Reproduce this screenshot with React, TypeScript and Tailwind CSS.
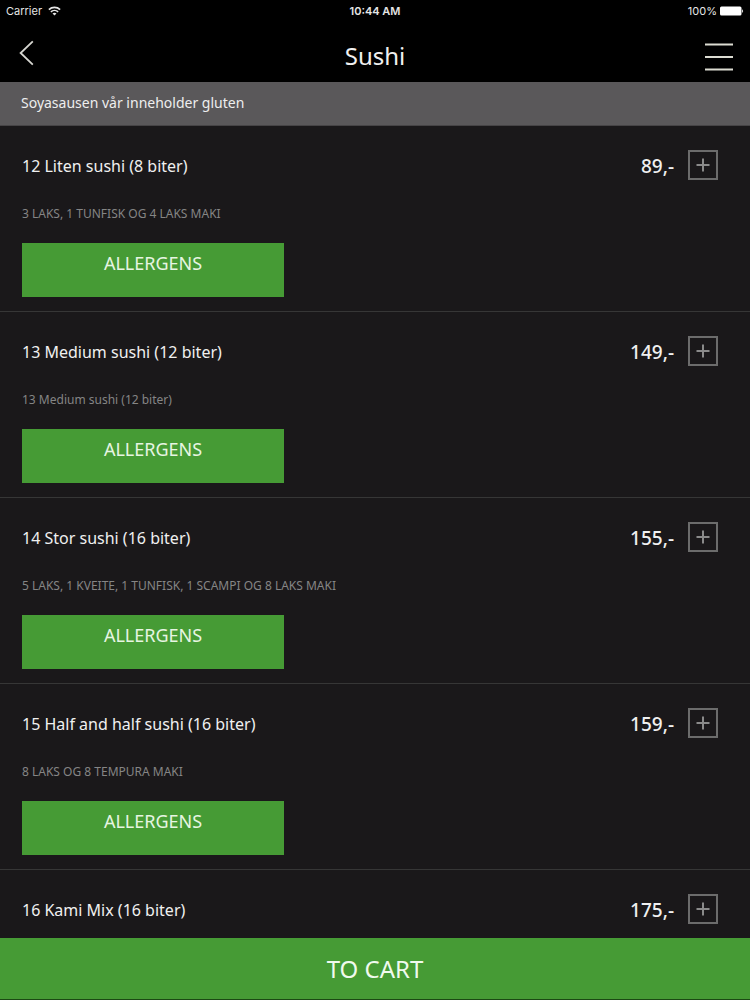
import React from 'react';

type DishProps = {
  name: string;
  price: string;
  description?: string;
};

const dishes: DishProps[] = [
  { name: '12 Liten sushi (8 biter)', description: '3 LAKS, 1 TUNFISK OG 4 LAKS MAKI', price: '89,-' },
  { name: '13 Medium sushi (12 biter)', description: '13 Medium sushi (12 biter)', price: '149,-' },
  {
    name: '14 Stor sushi (16 biter)',
    description: '5 LAKS, 1 KVEITE, 1 TUNFISK, 1 SCAMPI OG 8 LAKS MAKI',
    price: '155,-'
  },
  { name: '15 Half and half sushi (16 biter)', description: '8 LAKS OG 8 TEMPURA MAKI', price: '159,-' },
  { name: '16 Kami Mix (16 biter)', price: '175,-' }
];

const WifiIcon = () => (
  <svg width="13" height="10" viewBox="0 0 13 10" fill="none" stroke="#e5e5e5" strokeWidth="1.7" aria-hidden="true">
    <path d="M0.9 3.6C4 0.6 9 0.6 12.1 3.6" />
    <path d="M2.9 5.9C4.9 4 8.1 4 10.1 5.9" />
    <path d="M6.5 9.6L4.5 7.6C5.7 6.6 7.3 6.6 8.5 7.6Z" fill="#e5e5e5" stroke="none" />
  </svg>
);

const BatteryIcon = () => (
  <svg width="25" height="10" viewBox="0 0 25 10" fill="#ffffff" aria-hidden="true">
    <rect x="1" y="0.5" width="21.5" height="9" rx="1.5" />
    <path d="M23.2 3.2C24.4 3.6 24.4 6.4 23.2 6.8Z" />
  </svg>
);

const StatusBar = () => (
  <div className="grid grid-cols-3 items-center h-[22px] px-1.5 font-['Inter','Liberation_Sans',sans-serif] text-[11px] text-[#e5e5e5]">
    <div className="flex items-center gap-1.5">
      <span>Carrier</span>
      <WifiIcon />
    </div>
    <span className="text-center font-semibold">10:44 AM</span>
    <div className="flex items-center justify-end gap-0.5">
      <span>100%</span>
      <BatteryIcon />
    </div>
  </div>
);

const Header = () => (
  <header className="flex items-center justify-between h-[60px] px-4">
    <button type="button" aria-label="Back" className="flex items-center w-8 h-10 pt-0.5 pl-0.5">
      <svg width="17" height="26" viewBox="0 0 17 26" fill="none" stroke="#d6d6d0" strokeWidth="1.8">
        <path d="M14.8 1.3L2.6 13L14.8 24.7" />
      </svg>
    </button>
    <h1 className="text-2xl text-[#f0f0f0] pt-2">Sushi</h1>
    <button type="button" aria-label="Menu" className="flex items-center justify-end w-8 h-10 pt-2.5">
      <svg width="30" height="28" viewBox="0 0 30 28" fill="none" stroke="#dcdcd2" strokeWidth="2">
        <path d="M1 1.5H29M1 14H29M1 26.5H29" />
      </svg>
    </button>
  </header>
);

const Dish = ({ name, description, price }: DishProps) => (
  <li className="flex items-start justify-between pt-6 pl-[22px] pr-8 pb-[14px] border-b border-[#363636]">
    <div className="pt-1">
      <h2 className="text-base leading-6 text-[#f0f0f0]">{name}</h2>
      {description && (
        <>
          <p className="mt-6 text-xs leading-6 text-[#858585]">{description}</p>
          <button
            type="button"
            className="flex justify-center w-[262px] h-[54px] mt-[17px] pt-2 bg-[#469b35] text-lg leading-6 text-[#e6f5e2]"
          >
            ALLERGENS
          </button>
        </>
      )}
    </div>
    <div className="flex items-center gap-3.5">
      <span className="pt-0.5 text-[19px] leading-6 font-medium text-[#f0f0f0]">{price}</span>
      <button
        type="button"
        aria-label={`Add ${name}`}
        className="flex items-center justify-center w-[30px] h-[30px] border-2 border-[#6c6c6c]"
      >
        <svg width="14" height="14" viewBox="0 0 14 14" stroke="#8a8a8a" strokeWidth="2" aria-hidden="true">
          <path d="M7 0.5V13.5M0.5 7H13.5" />
        </svg>
      </button>
    </div>
  </li>
);

const App = () => {
  return (
    <div className="flex flex-col h-screen bg-[#1a181a] font-['Noto_Sans','Open_Sans',sans-serif]">
      {/* Top bar */}
      <div className="shrink-0 bg-black">
        <StatusBar />
        <Header />
      </div>

      {/* Allergy notice */}
      <p className="shrink-0 h-11 px-[21px] pt-[9px] bg-[#5a585a] border-b border-[#464446] text-sm leading-6 text-[#eeeeee]">
        Soyasausen vår inneholder gluten
      </p>

      {/* Dishes */}
      <ul className="flex-1 min-h-0 overflow-y-auto [scrollbar-width:none]">
        {dishes.map((dish) => (
          <Dish key={dish.name} {...dish} />
        ))}
      </ul>

      {/* Cart */}
      <button
        type="button"
        className="shrink-0 h-[62px] bg-[#469b35] border-b border-[#1c4a14] text-2xl text-[#f0faee]"
      >
        TO CART
      </button>
    </div>
  );
};

export default App;
